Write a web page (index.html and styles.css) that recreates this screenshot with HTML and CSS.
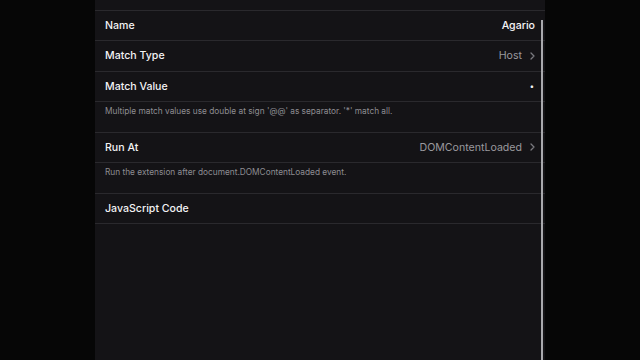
FILE: index.html
```html
<!DOCTYPE html>
<html>
<head>
<meta charset="utf-8">
<link rel="stylesheet" href="styles.css">
</head>
<body>
<div class="panel">
  <div class="top"></div>
  <div class="row"><span class="label">Name</span><span class="value strong">Agario</span></div>
  <div class="row"><span class="label">Match Type</span><span class="value">Host<svg class="chev" width="5" height="8" viewBox="0 0 5 8"><polyline points="1,1 4,4 1,7" fill="none" stroke="#7a7a7f" stroke-width="1.3" stroke-linecap="round" stroke-linejoin="round"/></svg></span></div>
  <div class="row"><span class="label">Match Value</span><span class="value strong dot">•</span></div>
  <div class="note">Multiple match values use double at sign '@@' as separator. '*' match all.</div>
  <div class="row"><span class="label">Run At</span><span class="value">DOMContentLoaded<svg class="chev" width="5" height="8" viewBox="0 0 5 8"><polyline points="1,1 4,4 1,7" fill="none" stroke="#7a7a7f" stroke-width="1.3" stroke-linecap="round" stroke-linejoin="round"/></svg></span></div>
  <div class="note">Run the extension after document.DOMContentLoaded event.</div>
  <div class="row"><span class="label">JavaScript Code</span></div>
  <div class="scrollbar"></div>
</div>
</body>
</html>
```
FILE: styles.css
```css
html, body {
  margin: 0;
  padding: 0;
  background: #060606;
  height: 360px;
  overflow: hidden;
}
body {
  font-family: Inter, "Noto Sans", sans-serif;
}
.panel {
  position: relative;
  margin-left: 95px;
  width: 450px;
  height: 360px;
  background: #141316;
  display: flex;
  flex-direction: column;
}
.top {
  height: 10px;
  border-bottom: 1px solid #2a292d;
  flex: none;
  box-sizing: border-box;
  height: 10.5px;
}
.row {
  flex: none;
  box-sizing: border-box;
  height: 30.5px;
  border-bottom: 1px solid #2a292d;
  display: flex;
  align-items: center;
  justify-content: space-between;
  padding: 0 10px 0 10px;
}
.label {
  color: #f2f2f4;
  font-size: 10.6px;
  font-weight: 500;
}
.value {
  color: #9a999e;
  font-size: 10.6px;
  display: flex;
  align-items: center;
  gap: 8px;
}
.value.strong {
  color: #f4f4f6;
  font-weight: 500;
}
.dot {
  font-size: 8px;
  padding-right: 1px;
}
.chev {
  display: block;
  margin-right: 0;
}
.note {
  flex: none;
  box-sizing: border-box;
  height: 30.5px;
  border-bottom: 1px solid #2a292d;
  padding: 4px 10px 0 10px;
  color: #8e8d92;
  font-size: 8.3px;
  line-height: 10px;
}
.scrollbar {
  position: absolute;
  left: 446px;
  top: 20px;
  width: 2px;
  height: 340px;
  background: #a9a9ad;
}
```
